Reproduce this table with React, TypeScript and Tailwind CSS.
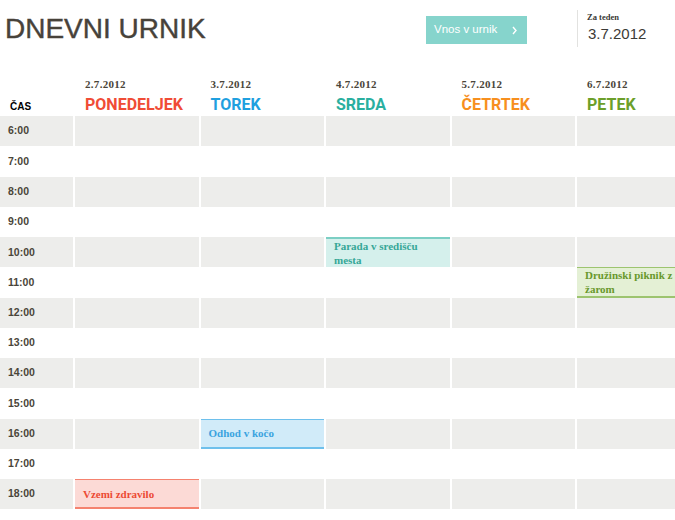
import React from "react";

type Event = {
  text: string;
  box: string;
  label: string;
};

const days = [
  { date: "2.7.2012", name: "PONEDELJEK", color: "text-[#f04c36]" },
  { date: "3.7.2012", name: "TOREK", color: "text-[#1fa0df]" },
  { date: "4.7.2012", name: "SREDA", color: "text-[#2aaf9f]" },
  { date: "5.7.2012", name: "ČETRTEK", color: "text-[#f78f1e]" },
  { date: "6.7.2012", name: "PETEK", color: "text-[#6c9f2a]" },
];

const hours = ["6:00", "7:00", "8:00", "9:00", "10:00", "11:00", "12:00", "13:00", "14:00", "15:00", "16:00", "17:00", "18:00"];

// ključ: "ura-dan"
const events: Record<string, Event> = {
  "10:00-2": {
    text: "Parada v središču mesta",
    box: "bg-[#d5f0ec] border-t-2 border-b-2 border-[#7ccfc4]",
    label: "text-[#36a797]",
  },
  "11:00-4": {
    text: "Družinski piknik z žarom",
    box: "bg-[#e4f0d5] border-t border-b-2 border-[#9dc46f]",
    label: "text-[#68982c]",
  },
  "16:00-1": {
    text: "Odhod v kočo",
    box: "bg-[#d1ebf9] border-t border-b-2 border-[#6ec0ec]",
    label: "text-[#3ba3df]",
  },
  "18:00-0": {
    text: "Vzemi zdravilo",
    box: "bg-[#fcdad6] border-t border-b-2 border-[#f5826f]",
    label: "text-[#ec4a34]",
  },
};

const serif = "font-['Liberation_Serif',serif]";
const sans = "font-['Liberation_Sans',Arial,sans-serif]";

const App = () => {
  return (
    <div className={`w-[675px] h-[520px] overflow-hidden bg-white ${sans}`}>
      {/* Glava */}
      <div className="flex h-[72px]">
        <div className="w-[426px] pl-[5px] pt-[15px]">
          <h1 className="text-[28px] leading-none text-[#47423a] [-webkit-text-stroke:0.4px_#47423a]">DNEVNI URNIK</h1>
        </div>
        <button className="mt-[16px] flex h-[28px] w-[101px] items-center justify-between bg-[#86d4cc] pl-[8px] pr-[10px] text-[11.5px] text-white">
          <span>Vnos v urnik</span>
          <svg width="5" height="9" viewBox="0 0 5 9" fill="none">
            <path d="M1 1l3 3.5L1 8" stroke="white" strokeWidth="1.4" />
          </svg>
        </button>
        <div className="ml-[50px] mt-[10px] h-[37px] w-px bg-[#e2e2e0]" />
        <div className="ml-[9px] flex flex-col">
          <span className={`mt-[12.5px] text-[8.5px] font-bold leading-none text-[#3a3935] ${serif}`}>Za teden</span>
          <span className="ml-[1px] mt-[4.7px] text-[15px] leading-none text-[#3b3a36]">3.7.2012</span>
        </div>
      </div>

      {/* Dnevi */}
      <div className="grid h-[44px] grid-cols-[73px_repeat(5,123.5px)] gap-x-[2px]">
        <div className="pl-[10px] pt-[29.5px] text-[10px] font-bold leading-none text-black">ČAS</div>
        {days.map((d) => (
          <div key={d.date} className="flex flex-col pl-[10px] pt-[7px]">
            <span className={`text-[11px] font-bold leading-[11px] tracking-[0.3px] text-[#4a4539] ${serif}`}>{d.date}</span>
            <span className={`mt-[6.6px] whitespace-nowrap font-['Roboto',sans-serif] text-[16px] font-bold leading-none ${d.color}`}>
              {d.name}
            </span>
          </div>
        ))}
      </div>

      {/* Ure */}
      {hours.map((h, i) => {
        const shaded = i % 2 === 0;
        const cell = shaded ? "bg-[#ededeb]" : "bg-white";
        return (
          <div key={h} className="grid h-[30.25px] grid-cols-[73px_repeat(5,123.5px)] gap-x-[2px]">
            <div className={`flex items-center pl-[8px] text-[10.5px] font-bold text-[#4a4539] ${cell}`}>{h}</div>
            {days.map((_, di) => {
              const ev = events[`${h}-${di}`];
              if (ev) {
                return (
                  <div key={di} className={`flex items-center px-[8px] ${ev.box}`}>
                    <span className={`text-[11px] font-bold leading-[14px] ${serif} ${ev.label}`}>{ev.text}</span>
                  </div>
                );
              }
              return <div key={di} className={cell} />;
            })}
          </div>
        );
      })}
    </div>
  );
};

export default App;
